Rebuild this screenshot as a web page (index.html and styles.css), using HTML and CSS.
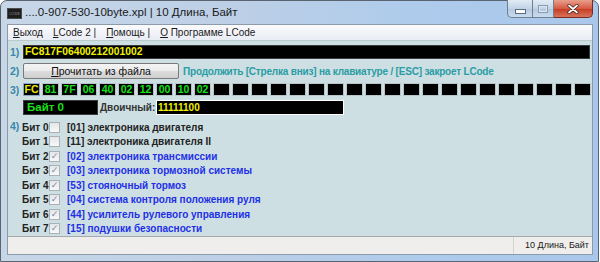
FILE: index.html
```html
<!DOCTYPE html>
<html>
<head>
<meta charset="utf-8">
<link rel="stylesheet" href="styles.css">
</head>
<body>
<div class="window">
  <div class="titlebar">
    <div class="appicon"><span>LCODE</span></div>
    <div class="title">....0-907-530-10byte.xpl | 10 Длина, Байт</div>
    <div class="caption">
      <div class="cb cb-min"><span class="min-bar"></span></div>
      <div class="cb cb-max"><span class="max-box"></span></div>
      <div class="cb cb-close">
        <svg width="14" height="10" viewBox="0 0 14 10"><path d="M3 1.5 L11 8.5 M11 1.5 L3 8.5" stroke="#3a1a1a" stroke-width="3.2" stroke-linecap="round"/><path d="M3 1.5 L11 8.5 M11 1.5 L3 8.5" stroke="#ffffff" stroke-width="1.8" stroke-linecap="round"/></svg>
      </div>
    </div>
  </div>
  <div class="client">
    <div class="menubar">
      <span class="menu-item"><u>В</u>ыход</span>
      <span class="menu-item"><u>L</u>Code 2 |</span>
      <span class="menu-item"><u>П</u>омощь |</span>
      <span class="menu-item"><u>О</u> Программе LCode</span>
    </div>
    <div class="content">
      <div class="row">
        <span class="num">1)</span>
        <div class="code-box">FC817F06400212001002</div>
      </div>
      <div class="row">
        <span class="num">2)</span>
        <button class="btn"><u>П</u>рочитать из файла</button>
        <span class="hint">Продолжить [Стрелка вниз] на клавиатуре / [ESC] закроет LCode</span>
      </div>
      <div class="row">
        <span class="num">3)</span>
        <div class="cells">
          <span class="cell cell-sel">FC</span><span class="cell">81</span><span class="cell">7F</span><span class="cell">06</span><span class="cell">40</span><span class="cell">02</span><span class="cell">12</span><span class="cell">00</span><span class="cell">10</span><span class="cell">02</span><span class="cell"></span><span class="cell"></span><span class="cell"></span><span class="cell"></span><span class="cell"></span><span class="cell"></span><span class="cell"></span><span class="cell"></span><span class="cell"></span><span class="cell"></span><span class="cell"></span><span class="cell"></span><span class="cell"></span><span class="cell"></span><span class="cell"></span><span class="cell"></span><span class="cell"></span><span class="cell"></span><span class="cell"></span><span class="cell"></span>
        </div>
      </div>
      <div class="row">
        <span class="num"></span>
        <div class="byte-box">Байт 0</div>
        <span class="bin-label">Двоичный:</span>
        <div class="bin-box">11111100</div>
      </div>
      <div class="row row-bits">
        <span class="num num-bits">4)</span>
        <div class="bits">
          <div class="bit"><span class="bit-name">Бит 0</span><span class="chk"></span><span class="bit-text">[01] электроника двигателя</span></div>
          <div class="bit"><span class="bit-name">Бит 1</span><span class="chk"></span><span class="bit-text">[11] электроника двигателя II</span></div>
          <div class="bit on"><span class="bit-name">Бит 2</span><span class="chk">✓</span><span class="bit-text">[02] электроника трансмиссии</span></div>
          <div class="bit on"><span class="bit-name">Бит 3</span><span class="chk">✓</span><span class="bit-text">[03] электроника тормозной системы</span></div>
          <div class="bit on"><span class="bit-name">Бит 4</span><span class="chk">✓</span><span class="bit-text">[53] стояночный тормоз</span></div>
          <div class="bit on"><span class="bit-name">Бит 5</span><span class="chk">✓</span><span class="bit-text">[04] система контроля положения руля</span></div>
          <div class="bit on"><span class="bit-name">Бит 6</span><span class="chk">✓</span><span class="bit-text">[44] усилитель рулевого управления</span></div>
          <div class="bit on"><span class="bit-name">Бит 7</span><span class="chk">✓</span><span class="bit-text">[15] подушки безопасности</span></div>
        </div>
      </div>
    </div>
    <div class="statusbar">
      <div class="status-fill"></div>
      <div class="status-cell">10 Длина, Байт</div>
    </div>
  </div>
</div>
</body>
</html>
```
FILE: styles.css
```css
html, body {
  margin: 0;
  padding: 0;
  background: #ffffff;
  width: 600px;
  height: 262px;
  overflow: hidden;
  font-family: "Liberation Sans", Arial, sans-serif;
}

.window {
  box-sizing: border-box;
  width: 599px;
  height: 262px;
  border: 1px solid #5a6470;
  border-radius: 7px 7px 0 0;
  background: linear-gradient(to right, #c7d7e8 0%, #bccfe6 40%, #aecbec 70%, #a8c7ea 100%);
  padding: 0 5px 6px 6px;
  display: flex;
  flex-direction: column;
}

.titlebar {
  height: 23px;
  display: flex;
  align-items: flex-start;
  position: relative;
}

.appicon {
  width: 15px;
  height: 11px;
  margin: 7px 0 0 0;
  background: #1e1e1e;
  border: 1px solid #4a4a4a;
  box-sizing: border-box;
  display: flex;
  align-items: center;
  justify-content: center;
  overflow: hidden;
}
.appicon span {
  font-size: 3px;
  color: #999;
}

.title {
  margin: 5px 0 0 3px;
  font-size: 11.5px;
  color: #1a1a1a;
  white-space: nowrap;
}

.caption {
  position: absolute;
  right: 0;
  top: -1px;
  display: flex;
}
.cb {
  box-sizing: border-box;
  height: 18px;
  border: 1px solid #6f7f92;
  border-top: none;
  display: flex;
  align-items: center;
  justify-content: center;
}
.cb-min {
  width: 25px;
  border-radius: 0 0 0 5px;
  border-right: none;
  background: linear-gradient(#e2ebf5, #c3d4e7 50%, #b3c8e0 51%, #c9dbee);
}
.cb-max {
  width: 22px;
  background: linear-gradient(#e2ebf5, #c3d4e7 50%, #b3c8e0 51%, #c9dbee);
}
.cb-close {
  width: 39px;
  border-radius: 0 0 5px 0;
  border-left: none;
  border-color: #7a2a22;
  background: linear-gradient(#e8a08d, #d65a42 50%, #c43a22 51%, #d9735a);
}
.min-bar {
  width: 9px;
  height: 3px;
  margin-top: 5px;
  background: #fff;
  border: 1px solid #5a6a80;
}
.max-box {
  width: 8px;
  height: 6px;
  border: 1px solid #8a9cb0;
  background: transparent;
  box-shadow: inset 0 0 0 1px #dde6f0;
}

.client {
  flex: 1;
  display: flex;
  flex-direction: column;
  background: #cddfe2;
  border: 1px solid #8c9bab;
  overflow: hidden;
}

.menubar {
  height: 15px;
  background: linear-gradient(#fbfbfd, #e9ecf4);
  border-bottom: 1px solid #b8cccc;
  display: flex;
  align-items: center;
  padding-left: 5px;
  font-size: 10px;
  color: #1a1a1a;
}
.menu-item {
  margin-right: 10px;
  white-space: nowrap;
}

.content {
  flex: 1;
  padding: 4px 2px 0 1px;
  display: flex;
  flex-direction: column;
  gap: 4px;
}

.row {
  display: flex;
  align-items: center;
}
.num {
  width: 14px;
  flex: none;
  font-size: 10.5px;
  font-weight: bold;
  color: #3a87ad;
  padding-left: 1px;
  box-sizing: border-box;
}

.code-box {
  flex: 1;
  height: 14px;
  box-sizing: border-box;
  background: #000;
  border: 1px solid #3a3a3a;
  color: #f0f000;
  font-weight: bold;
  font-size: 10.3px;
  line-height: 12px;
  padding-left: 1px;
}

.btn {
  width: 156px;
  height: 16px;
  box-sizing: border-box;
  margin: 0;
  padding: 0;
  border: 1px solid #7a7a7a;
  border-radius: 2px;
  background: linear-gradient(#f4f4f4 0%, #ebebeb 50%, #dddddd 51%, #cfcfcf 100%);
  font-family: "Liberation Sans", sans-serif;
  font-size: 10.5px;
  color: #111;
  line-height: 13px;
}
.hint {
  margin-left: 4px;
  font-size: 10px;
  font-weight: bold;
  letter-spacing: -0.2px;
  color: #2a9ca5;
  white-space: nowrap;
}

.cells {
  flex: 1;
  display: flex;
  gap: 2px;
}
.cell {
  width: 17px;
  height: 13px;
  box-sizing: border-box;
  background: #000;
  border: 1px solid #b8c4c8;
  color: #19e019;
  font-weight: bold;
  font-size: 10.5px;
  line-height: 11px;
  text-align: center;
}
.cell-sel {
  color: #e8e800;
  border-color: #8fa6c8;
}

.byte-box {
  width: 75px;
  height: 15px;
  box-sizing: border-box;
  background: #000;
  border: 1px solid #3a3a3a;
  color: #19e019;
  font-weight: bold;
  font-size: 11.5px;
  line-height: 13px;
  padding-left: 3px;
}
.bin-label {
  margin-left: 2px;
  font-size: 10px;
  font-weight: bold;
  color: #333;
  width: 56px;
}
.bin-box {
  width: 188px;
  height: 15px;
  box-sizing: border-box;
  background: #000;
  border: 1px solid #fff;
  color: #f0f000;
  font-weight: bold;
  font-size: 10px;
  line-height: 13px;
  padding-left: 1px;
}

.row-bits {
  align-items: flex-start;
  margin-top: 1px;
}
.bits {
  display: flex;
  flex-direction: column;
}
.bit {
  height: 14.5px;
  display: flex;
  align-items: center;
  font-size: 10px;
  font-weight: bold;
  white-space: nowrap;
}
.bit-name {
  width: 27px;
  margin-left: -1px;
  color: #222;
}
.chk {
  width: 11px;
  height: 11px;
  box-sizing: border-box;
  border: 1px solid #a8b0b8;
  background: linear-gradient(#e6e6e6, #f8f8f8);
  color: #7a8aa8;
  font-size: 9px;
  line-height: 9px;
  text-align: center;
  font-weight: normal;
  font-family: "DejaVu Sans", sans-serif;
}
.bit-text {
  margin-left: 7px;
  color: #222;
}
.bit.on .bit-text {
  color: #1f2fe8;
}

.statusbar {
  height: 17px;
  border-top: 1px solid #a6aaae;
  background: #f0eeec;
  display: flex;
}
.status-fill {
  flex: 1;
}
.status-cell {
  width: 75px;
  border-left: 1px solid #d6d4d0;
  font-size: 9px;
  color: #1a1a1a;
  line-height: 17px;
  text-align: right;
  padding-right: 3px;
  white-space: nowrap;
}
```
